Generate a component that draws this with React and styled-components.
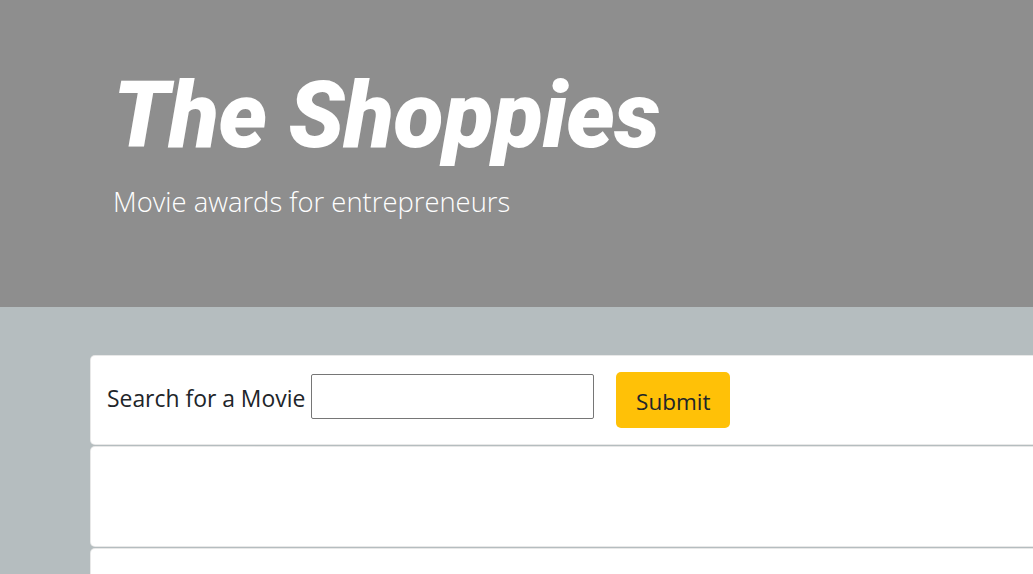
import styled, { createGlobalStyle } from "styled-components";

const GlobalStyle = createGlobalStyle`
  html, body {
    margin: 0;
    padding: 0;
    background: #b5bdbf;
    font-family: "Open Sans", "Noto Sans", sans-serif;
    overflow: hidden;
  }
`;

const Hero = styled.header`
  background: #8e8e8e;
  height: 307px;
  box-sizing: border-box;
  padding: 61px 0 0 113px;
  color: #fff;
`;

const Title = styled.h1`
  margin: 0;
  font-family: Roboto, "Liberation Sans", sans-serif;
  font-weight: 900;
  font-style: italic;
  font-size: 92px;
  line-height: 110px;
  letter-spacing: -0.6px;
`;

const Subtitle = styled.p`
  margin: 13px 0 0;
  font-family: "Open Sans", sans-serif;
  font-weight: 300;
  font-size: 27.4px;
  line-height: 36px;
`;

const Main = styled.main`
  padding: 48px 0 0 90px;
  display: flex;
  flex-direction: column;
  gap: 1px;
`;

const Card = styled.section`
  background: #fff;
  border: 1px solid rgba(0, 0, 0, 0.09);
  border-right: none;
  border-radius: 5px 0 0 5px;
  height: ${(p) => p.h}px;
  box-sizing: border-box;
`;

const SearchRow = styled.form`
  display: flex;
  align-items: center;
  height: 100%;
  padding: 0 0 0 16px;
`;

const Label = styled.label`
  font-family: "Open Sans", sans-serif;
  font-size: 22.9px;
  color: #212529;
  margin-right: 6px;
  margin-bottom: 4px;
`;

const Input = styled.input`
  width: 283px;
  height: 45px;
  box-sizing: border-box;
  border: 1px solid #767676;
  border-radius: 2px;
  margin: 0 22px 8px 0;
`;

const Button = styled.button`
  width: 114px;
  height: 56px;
  background: #ffc107;
  border: none;
  border-radius: 5px;
  font-family: "Open Sans", sans-serif;
  font-size: 22.5px;
  color: #212529;
  padding-top: 4px;
  cursor: pointer;
`;

export default function App() {
  return (
    <>
      <GlobalStyle />
      <Hero>
        <Title>The Shoppies</Title>
        <Subtitle>Movie awards for entrepreneurs</Subtitle>
      </Hero>
      <Main>
        <Card h={90}>
          <SearchRow onSubmit={(e) => e.preventDefault()}>
            <Label htmlFor="q">Search for a Movie</Label>
            <Input id="q" type="text" />
            <Button type="submit">Submit</Button>
          </SearchRow>
        </Card>
        <Card h={101} />
        <Card h={100} />
      </Main>
    </>
  );
}
